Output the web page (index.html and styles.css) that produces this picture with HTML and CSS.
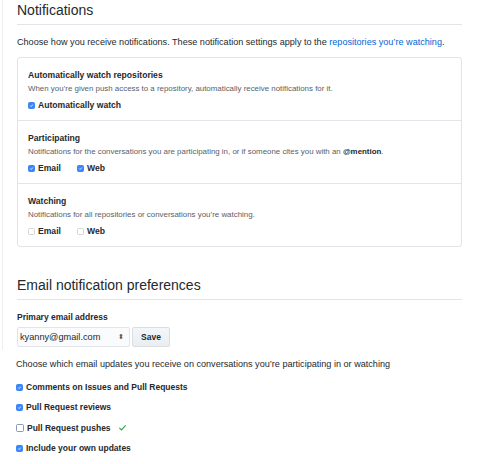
FILE: index.html
```html
<!DOCTYPE html>
<html lang="en">
<head>
    <meta charset="UTF-8">
    <title>Notification settings</title>
    <link rel="stylesheet" href="styles.css">
</head>
<body>
    <div class="page">
        <div class="upper">
            <h2 class="subhead">Notifications</h2>
            <p class="intro">Choose how you receive notifications. These notification settings apply to the <a href="#">repositories you’re watching</a>.</p>

            <div class="box">
                <div class="box-row">
                    <h4 class="row-title">Automatically watch repositories</h4>
                    <p class="note">When you’re given push access to a repository, automatically receive notifications for it.</p>
                    <div class="checks">
                        <label class="check"><span class="cb on"><svg viewBox="0 0 10 10"><path d="M2.3 5.2l1.9 1.9 3.6-4" /></svg></span>Automatically watch</label>
                    </div>
                </div>
                <div class="box-row">
                    <h4 class="row-title">Participating</h4>
                    <p class="note">Notifications for the conversations you are participating in, or if someone cites you with an <strong>@mention</strong>.</p>
                    <div class="checks">
                        <label class="check"><span class="cb on"><svg viewBox="0 0 10 10"><path d="M2.3 5.2l1.9 1.9 3.6-4" /></svg></span>Email</label>
                        <label class="check"><span class="cb on"><svg viewBox="0 0 10 10"><path d="M2.3 5.2l1.9 1.9 3.6-4" /></svg></span>Web</label>
                    </div>
                </div>
                <div class="box-row">
                    <h4 class="row-title">Watching</h4>
                    <p class="note">Notifications for all repositories or conversations you’re watching.</p>
                    <div class="checks">
                        <label class="check"><span class="cb"></span>Email</label>
                        <label class="check"><span class="cb"></span>Web</label>
                    </div>
                </div>
            </div>

            <h2 class="subhead spaced">Email notification preferences</h2>
            <p class="field-label">Primary email address</p>
            <div class="email-form">
                <div class="select">kyanny@gmail.com<span class="arrows">⬍</span></div>
                <button class="btn">Save</button>
            </div>
        </div>

        <div class="lower">
            <p class="lower-intro">Choose which email updates you receive on conversations you’re participating in or watching</p>
            <ul class="prefs">
                <li><span class="cb on"><svg viewBox="0 0 10 10"><path d="M2.3 5.2l1.9 1.9 3.6-4" /></svg></span>Comments on Issues and Pull Requests</li>
                <li><span class="cb on"><svg viewBox="0 0 10 10"><path d="M2.3 5.2l1.9 1.9 3.6-4" /></svg></span>Pull Request reviews</li>
                <li><span class="cb outline"></span>Pull Request pushes<svg class="ok" viewBox="0 0 10 10"><path d="M1.5 5.5l2.3 2.2 4.7-5" /></svg></li>
                <li><span class="cb on"><svg viewBox="0 0 10 10"><path d="M2.3 5.2l1.9 1.9 3.6-4" /></svg></span>Include your own updates</li>
            </ul>
        </div>
    </div>
</body>
</html>
```

FILE: styles.css
```css
* {
    box-sizing: border-box;
}
body {
    margin: 0;
    background: #fff;
    color: #24292e;
    font-family: "Liberation Sans", Arial, sans-serif;
}
.page {
    width: 500px;
}
.upper {
    margin-left: 2px;
    padding: 0 38px 0 14px;
    border-left: 1px solid #eeeeee;
    height: 350px;
}
.subhead {
    margin: 0;
    padding: 1px 0 5px;
    font-size: 14px;
    line-height: 18px;
    font-weight: normal;
    border-bottom: 1px solid #e1e4e8;
}
.subhead.spaced {
    margin-top: 28px;
}
.intro {
    margin: 10px 0 8px;
    font-size: 9.1px;
    line-height: 14px;
}
.intro a {
    color: #0366d6;
    text-decoration: none;
}
.box {
    border: 1px solid #e1e4e8;
    border-radius: 3px;
}
.box-row {
    padding: 10px 10px 8px;
}
.box-row + .box-row {
    border-top: 1px solid #e1e4e8;
}
.row-title {
    margin: 0;
    font-size: 8.6px;
    line-height: 14px;
}
.note {
    margin: 0;
    font-size: 7.9px;
    line-height: 14px;
    color: #586069;
}
.note strong {
    color: #24292e;
}
.checks {
    display: flex;
    gap: 16px;
    margin-top: 2px;
}
.check {
    display: flex;
    align-items: center;
    gap: 3px;
    font-size: 8.6px;
    line-height: 14px;
    font-weight: bold;
}
.cb {
    display: inline-flex;
    width: 7px;
    height: 7px;
    border-radius: 1.5px;
    background: #fff;
    border: 1px solid #d5d5d5;
    flex: none;
}
.cb.on {
    background: #3b86f7;
    border-color: #3b86f7;
}
.cb svg {
    width: 100%;
    height: 100%;
    fill: none;
    stroke: #fff;
    stroke-width: 1.6;
}
.field-label {
    margin: 11px 0 4px;
    font-size: 8.5px;
    line-height: 12px;
    font-weight: bold;
}
.email-form {
    display: flex;
    gap: 2px;
}
.select {
    display: flex;
    align-items: center;
    justify-content: space-between;
    width: 113px;
    height: 20px;
    padding: 0 5px 0 2px;
    font-size: 9.2px;
    background: #fafbfc;
    border: 1px solid #e1e4e8;
    border-radius: 2px;
}
.arrows {
    font-size: 7px;
    color: #555;
}
.btn {
    width: 38px;
    height: 20px;
    padding: 0;
    font-family: inherit;
    font-size: 8.5px;
    font-weight: bold;
    color: #24292e;
    background: linear-gradient(#f4f6f8, #eaeef1);
    border: 1px solid #dadde1;
    border-radius: 2px;
}
.lower {
    padding: 7px 16px 0;
}
.lower-intro {
    margin: 0 0 6px;
    font-size: 9.1px;
    line-height: 14px;
}
.prefs {
    list-style: none;
    margin: 0;
    padding: 0;
}
.prefs li {
    display: flex;
    align-items: center;
    gap: 3px;
    font-size: 8.5px;
    line-height: 20.3px;
    font-weight: bold;
}
.cb.outline {
    width: 8px;
    height: 8px;
    border-color: #8a98b8;
}
.ok {
    width: 9px;
    height: 9px;
    margin-left: 4px;
    fill: none;
    stroke: #28a745;
    stroke-width: 1.2;
}
```
